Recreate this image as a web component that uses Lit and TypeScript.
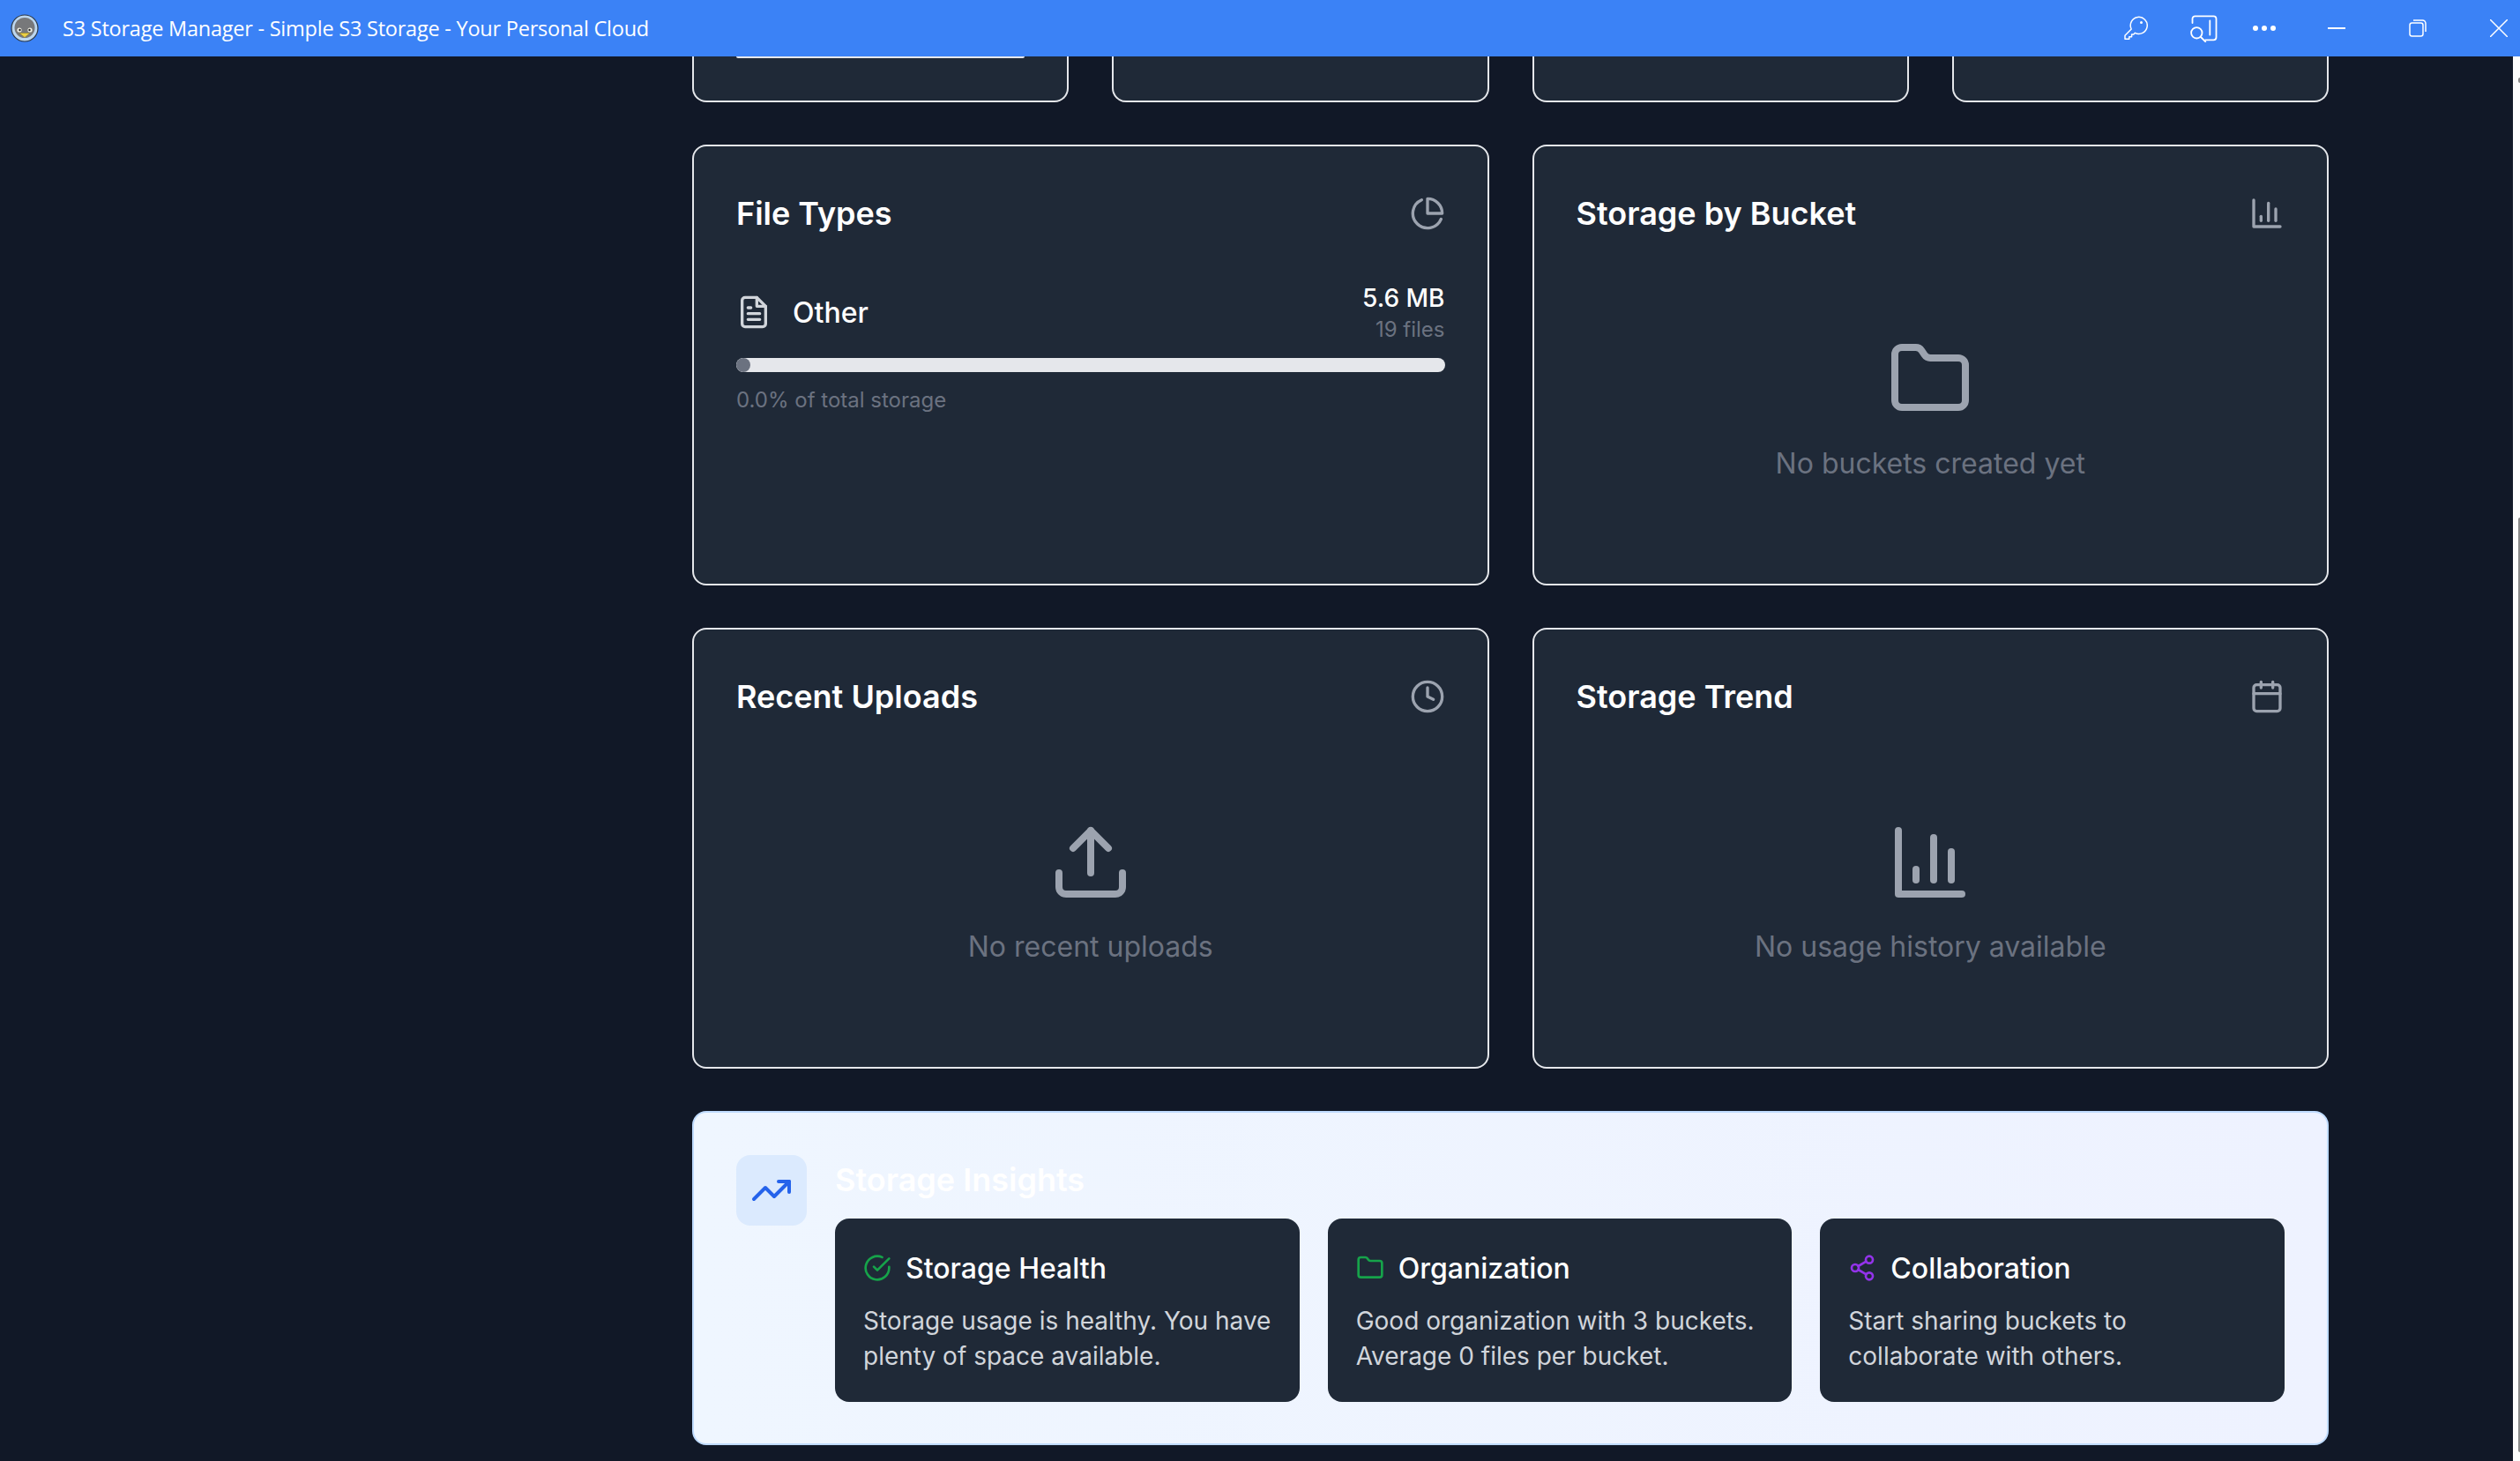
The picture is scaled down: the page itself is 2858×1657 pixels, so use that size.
import { LitElement, html, css, svg } from "lit";
import { customElement } from "lit/decorators.js";

const ic = (size: number, sw: number, body: unknown, cls = "") => html`<svg class=${cls} width=${size} height=${size} viewBox="0 0 24 24" fill="none" stroke="currentColor" stroke-width=${sw} stroke-linecap="round" stroke-linejoin="round">${body}</svg>`;

const pie = svg`<path d="M21.2 15.9A10 10 0 1 1 8 2.8"/><path d="M22 12A10 10 0 0 0 12 2v10z"/>`;
const bars = svg`<path d="M3 3v18h18"/><path d="M8 17v-3"/><path d="M13 17V5"/><path d="M18 17V9"/>`;
const clock = svg`<circle cx="12" cy="12" r="10"/><path d="M12 6v6l4 2"/>`;
const cal = svg`<rect x="3" y="4" width="18" height="18" rx="2"/><path d="M16 2v4M8 2v4M3 10h18"/>`;
const folder = svg`<path d="M20 20a2 2 0 0 0 2-2V8a2 2 0 0 0-2-2h-7.900a2 2 0 0 1-1.700-.9l-.8-1.200A2 2 0 0 0 7.900 3H4a2 2 0 0 0-2 2v13a2 2 0 0 0 2 2z"/>`;
const upload = svg`<path d="M21 15v4a2 2 0 0 1-2 2H5a2 2 0 0 1-2-2v-4"/><path d="M17 8l-5-5-5 5"/><path d="M12 3v12"/>`;
const doc = svg`<path d="M14 2H6a2 2 0 0 0-2 2v16a2 2 0 0 0 2 2h12a2 2 0 0 0 2-2V8z"/><path d="M14 2v6h6"/><path d="M16 13H8M16 17H8M10 9H8"/>`;
const trend = svg`<path d="M22 7l-8.500 8.500-5-5L2 17"/><path d="M16 7h6v6"/>`;
const check = svg`<path d="M22 11.100V12a10 10 0 1 1-5.900-9.100"/><path d="M22 4L12 14l-3-3"/>`;
const share = svg`<circle cx="18" cy="5" r="3"/><circle cx="6" cy="12" r="3"/><circle cx="18" cy="19" r="3"/><path d="M8.600 13.500l6.800 4M15.400 6.500l-6.800 4"/>`;

@customElement("app-root")
export class AppRoot extends LitElement {
  static styles = css`
    :host { display: block; width: 2858px; height: 1657px; overflow: hidden; background: #111827; font-family: Inter, "Liberation Sans", sans-serif; }
    .titlebar { height: 64px; background: #3b82f6; color: #fff; display: flex; align-items: center; }
    .logo { margin-left: 12px; width: 32px; height: 32px; flex: none; display: block; }
    .wintitle { margin-left: 27px; font: 400 23.5px "Open Sans", sans-serif; letter-spacing: -0.23px; flex: 1; white-space: nowrap; }
    .winbtns { display: flex; align-items: center; height: 64px; }
    .key { margin-right: 47px; }
    .finder { margin-right: 39px; }
    .dots { margin-right: 58px; }
    .min { margin-right: 72px; }
    .restore { margin-right: 72px; }
    .close { margin-right: 14px; }
    .body { display: flex; height: 1593px; }
    .content { flex: 1; padding: 0 209px 0 785px; display: flex; flex-direction: column; gap: 48px; min-width: 0; }
    .stats { display: grid; grid-template-columns: repeat(4, 1fr); column-gap: 49px; height: 52px; flex: none; }
    .stat { background: #1f2937; border: 2px solid #e5e7eb; border-top: 0; border-radius: 0 0 16px 16px; box-sizing: border-box; padding: 0 48px; }
    .statbar { height: 2px; background: #e5e7eb; border-radius: 0 0 4px 4px; }
    .grid { display: grid; grid-template-columns: 1fr 1fr; column-gap: 49px; row-gap: 48px; }
    .card { height: 500px; box-sizing: border-box; background: #1f2937; border: 2px solid #e5e7eb; border-radius: 16px; padding: 48px; display: flex; flex-direction: column; }
    .cardhead { display: flex; align-items: center; justify-content: space-between; height: 56px; flex: none; }
    .cardhead h3 { margin: 0; font-size: 36px; line-height: 56px; font-weight: 600; color: #fff; }
    .cardhead svg { color: #9ca3af; }
    .ftrow { display: flex; align-items: center; justify-content: space-between; margin-top: 48px; }
    .ftleft { display: flex; align-items: center; gap: 24px; color: #fff; font-size: 32px; font-weight: 500; }
    .ftleft svg { color: #d1d5db; }
    .ftright { text-align: right; }
    .ftsize { color: #fff; font-size: 28px; line-height: 40px; font-weight: 500; }
    .ftcount { color: #6b7280; font-size: 24px; line-height: 32px; }
    .bar { height: 16px; border-radius: 8px; background: #e5e7eb; margin-top: 16px; overflow: hidden; }
    .barfill { width: 16px; height: 100%; background: #6b7280; border-radius: 8px; }
    .pct { color: #6b7280; font-size: 24px; line-height: 32px; margin-top: 16px; }
    .empty { display: flex; flex-direction: column; align-items: center; margin-top: 112px; }
    .empty svg { color: #9ca3af; }
    .empty p { margin: 24px 0 0; font-size: 32px; line-height: 48px; color: #6b7280; }
    .insights { height: 379px; flex: none; box-sizing: border-box; display: flex; gap: 32px; padding: 48px 48px 0; border: 2px solid #bfdbfe; border-radius: 16px; background: linear-gradient(90deg, #eff6ff, #eef2ff); }
    .insicon { width: 80px; height: 80px; flex: none; background: #dbeafe; border-radius: 16px; color: #2563eb; display: flex; align-items: center; justify-content: center; }
    .insmain { flex: 1; min-width: 0; }
    .insmain h3 { margin: 0 0 16px; font-size: 36px; line-height: 56px; font-weight: 600; color: #fff; }
    .inscards { display: grid; grid-template-columns: repeat(3, 1fr); gap: 32px; }
    .ins { height: 208px; box-sizing: border-box; background: #1f2937; border-radius: 16px; padding: 32px 32px 0; }
    .inshead { display: flex; align-items: center; gap: 16px; height: 48px; color: #fff; font-size: 32px; font-weight: 500; }
    .green { color: #16a34a; } .purple { color: #9333ea; }
    .ins p { margin: 16px 0 0; color: #d1d5db; font-size: 28px; line-height: 40px; }
    .scroll { width: 8px; flex: none; background: #fcfcfc; position: relative; }
    .arrow { position: absolute; right: 0; top: 24px; width: 2px; height: 6px; background: #8b8b8b; border-radius: 2px 0 0 2px; }
    .thumb { position: absolute; right: 0; width: 2px; top: 523px; height: 1060px; background: #8b8b8b; border-radius: 2px 0 0 2px; }
  `;

  private head(title: string, icon: unknown) {
    return html`<div class="cardhead"><h3>${title}</h3>${ic(40, 2, icon)}</div>`;
  }
  private empty(text: string, icon: unknown) {
    return html`<div class="empty">${ic(96, 2, icon)}<p>${text}</p></div>`;
  }

  render() {
    return html`
      <div class="titlebar">
        <svg class="logo" viewBox="0 0 32 32">
          <circle cx="16" cy="16" r="15" fill="#bcd6ee" stroke="#2f3a46" stroke-width="1.200"/>
          <circle cx="16" cy="15.500" r="11.500" fill="#77787a"/>
          <circle cx="10" cy="18" r="2.600" fill="#f1efe2"/><circle cx="22" cy="18" r="2.600" fill="#f1efe2"/>
          <circle cx="10.500" cy="18" r="1.200" fill="#222"/><circle cx="21.500" cy="18" r="1.200" fill="#222"/>
          <path d="M10 21.500h12l-6 5z" fill="#ecd043" stroke="#8a7a20" stroke-width=".5"/>
        </svg>
        <div class="wintitle">S3 Storage Manager - Simple S3 Storage - Your Personal Cloud</div>
        <div class="winbtns">
          <svg class="key" width="28" height="28" viewBox="0 0 28 28" fill="none" stroke="#fff" stroke-width="1.500" stroke-linejoin="round"><path d="M9.200 15L2 22.300V26.300H6.800V23.800H9.600V21H11.800L13.400 19.300A9.500 9.500 0 1 0 9.200 15z"/><circle cx="20.500" cy="7.500" r="1.500" fill="#fff" stroke="none"/></svg>
          <svg class="finder" width="32" height="32" viewBox="0 0 32 32" fill="none" stroke="#fff" stroke-width="1.800" stroke-linecap="round"><path d="M3.500 10V5.300a3 3 0 0 1 3-3h21a3 3 0 0 1 3 3v21a3 3 0 0 1-3 3H18"/><path d="M23.300 7.500v16"/><circle cx="8.300" cy="21.300" r="6.200"/><path d="M13 26l5.300 5.300"/></svg>
          <svg class="dots" width="28" height="8" viewBox="0 0 28 8" fill="#fff"><circle cx="4" cy="4" r="3"/><circle cx="14" cy="4" r="3"/><circle cx="24" cy="4" r="3"/></svg>
          <svg class="min" width="20" height="2" viewBox="0 0 20 2" fill="#fff"><rect width="20" height="2"/></svg>
          <svg class="restore" width="20" height="20" viewBox="0 0 20 20" fill="none" stroke="#fff" stroke-width="1.500"><rect x="1" y="4" width="15" height="15" rx="2.500"/><path d="M5 1h10.500A3.500 3.500 0 0 1 19 4.500V14"/></svg>
          <svg class="close" width="20" height="20" viewBox="0 0 20 20" fill="none" stroke="#fff" stroke-width="1.500"><path d="M0 0l20 20M20 0L0 20"/></svg>
        </div>
      </div>
      <div class="body">
        <div class="content">
          <div class="stats">
            <div class="stat"><div class="statbar"></div></div>
            <div class="stat"></div><div class="stat"></div><div class="stat"></div>
          </div>
          <div class="grid">
            <div class="card">
              ${this.head("File Types", pie)}
              <div class="ftrow">
                <div class="ftleft">${ic(40, 2, doc)}<span>Other</span></div>
                <div class="ftright"><div class="ftsize">5.6 MB</div><div class="ftcount">19 files</div></div>
              </div>
              <div class="bar"><div class="barfill"></div></div>
              <div class="pct">0.0% of total storage</div>
            </div>
            <div class="card">${this.head("Storage by Bucket", bars)}${this.empty("No buckets created yet", folder)}</div>
            <div class="card">${this.head("Recent Uploads", clock)}${this.empty("No recent uploads", upload)}</div>
            <div class="card">${this.head("Storage Trend", cal)}${this.empty("No usage history available", bars)}</div>
          </div>
          <div class="insights">
            <div class="insicon">${ic(48, 2, trend)}</div>
            <div class="insmain">
              <h3>Storage Insights</h3>
              <div class="inscards">
                <div class="ins"><div class="inshead">${ic(32, 2, check, "green")}<span>Storage Health</span></div><p>Storage usage is healthy. You have plenty of space available.</p></div>
                <div class="ins"><div class="inshead">${ic(32, 2, folder, "green")}<span>Organization</span></div><p>Good organization with 3 buckets. Average 0 files per bucket.</p></div>
                <div class="ins"><div class="inshead">${ic(32, 2, share, "purple")}<span>Collaboration</span></div><p>Start sharing buckets to collaborate with others.</p></div>
              </div>
            </div>
          </div>
        </div>
        <div class="scroll"><div class="arrow"></div><div class="thumb"></div></div>
      </div>`;
  }
}
